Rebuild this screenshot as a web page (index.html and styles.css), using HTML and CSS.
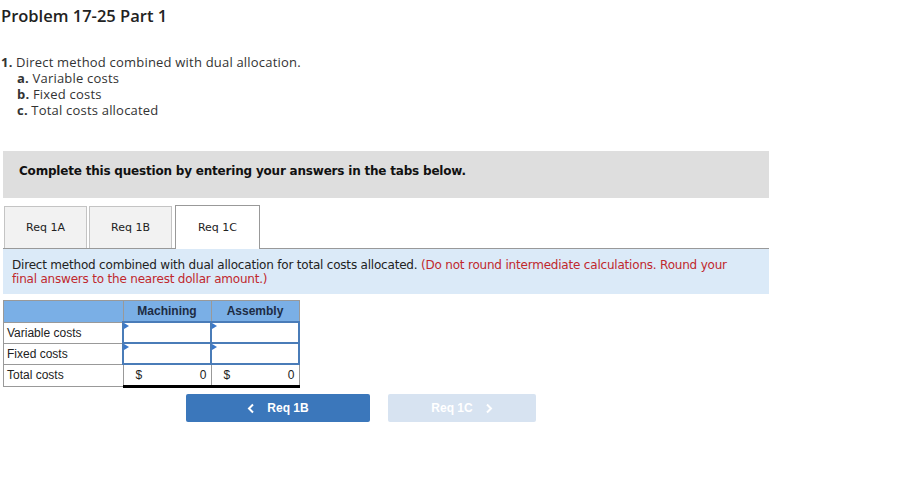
FILE: index.html
```html
<!DOCTYPE html>
<html>
<head>
<meta charset="utf-8">
<link rel="stylesheet" href="styles.css">
</head>
<body>
<h1 class="title">Problem 17-25 Part 1</h1>
<div class="parts">
  <div class="part"><b>1.</b> Direct method combined with dual allocation.</div>
  <div class="sub"><b>a.</b> Variable costs</div>
  <div class="sub"><b>b.</b> Fixed costs</div>
  <div class="sub"><b>c.</b> Total costs allocated</div>
</div>
<div class="wrap">
  <div class="banner">Complete this question by entering your answers in the tabs below.</div>
  <div class="tabs">
    <div class="tab">Req 1A</div>
    <div class="tab">Req 1B</div>
    <div class="tab active">Req 1C</div>
  </div>
  <div class="info">Direct method combined with dual allocation for total costs allocated. <span class="red">(Do not round intermediate calculations. Round your final answers to the nearest dollar amount.)</span></div>
  <table class="grid">
    <tr class="head"><th class="lbl"></th><th>Machining</th><th>Assembly</th></tr>
    <tr><td class="lbl">Variable costs</td><td class="inp"><span class="flag"></span></td><td class="inp"><span class="flag"></span></td></tr>
    <tr><td class="lbl">Fixed costs</td><td class="inp"><span class="flag"></span></td><td class="inp"><span class="flag"></span></td></tr>
    <tr class="total"><td class="lbl">Total costs</td><td class="val"><span>$</span><span>0</span></td><td class="val"><span>$</span><span>0</span></td></tr>
  </table>
  <div class="nav">
    <div class="btn prev"><svg class="chev left" width="8" height="11" viewBox="0 0 8 11"><path d="M6 1.5 L2 5.5 L6 9.5" fill="none" stroke="#fff" stroke-width="2"/></svg>Req 1B</div>
    <div class="btn next">Req 1C<svg class="chev right" width="8" height="11" viewBox="0 0 8 11"><path d="M2 1.5 L6 5.5 L2 9.5" fill="none" stroke="#fff" stroke-width="2"/></svg></div>
  </div>
</div>
</body>
</html>
```
FILE: styles.css
```css
html, body { margin: 0; padding: 0; background: #fff; }
body { font-family: "Open Sans", sans-serif; color: #222; }
.title { font-family: "Open Sans", sans-serif; font-weight: 600; font-size: 16.5px; line-height: 20px; margin: 6px 0 0 1px; color: #222; }
.parts { margin-top: 28px; font-family: "Open Sans", sans-serif; font-size: 13px; letter-spacing: 0.2px; line-height: 16px; color: #333; padding-left: 1px; }
.parts b { font-weight: 700; }
.sub { padding-left: 16px; }
.wrap { padding-left: 3px; width: 766px; }
.banner { margin-top: 33px; background: #dedede; height: 47px; box-sizing: border-box; padding-bottom: 7px; display: flex; align-items: center; padding-left: 16px; font-family: "DejaVu Sans", sans-serif; font-weight: bold; font-size: 12px; color: #111; letter-spacing: -0.2px; }
.tabs { margin-top: 7px; display: flex; gap: 2px; border-bottom: 1px solid #999; height: 43px; align-items: flex-end; }
.tab { width: 83px; height: 42px; box-sizing: border-box; background: #f2f2f2; border: 1px solid #c4c4c4; border-bottom: none; display: flex; align-items: center; justify-content: center; font-family: "DejaVu Sans", sans-serif; font-size: 11px; color: #222; }
.tab:first-child { margin-left: 1px; }
.tab.active { background: #fff; border: 1px solid #999; border-bottom: none; height: 44px; margin-bottom: -1px; margin-left: 1px; width: 85px; }
.info { background: #dbeaf8; height: 45px; box-sizing: border-box; padding: 9px 32px 0 9px; font-family: "DejaVu Sans", sans-serif; font-size: 12px; line-height: 14px; color: #222; letter-spacing: -0.2px; }
.red { color: #c0282d; }
.grid { margin-top: 6px; border-collapse: collapse; font-family: "Liberation Sans", Arial, sans-serif; font-size: 12px; color: #222; }
.grid td, .grid th { border: 1px solid #999; padding: 0; height: 20px; }
.grid th { background: #7aafe6; font-weight: bold; color: #1d2c44; text-align: center; width: 87px; }
.grid th.lbl { width: 118px; }
.grid td.lbl { padding-left: 3px; width: 115px; }
.grid td.inp { position: relative; border: 2px solid #4a7cb8; background: #fff; height: 17px; }
.flag { position: absolute; left: 0; top: 0; width: 0; height: 0; border-top: 3px solid transparent; border-bottom: 3px solid transparent; border-left: 5px solid #3a78c9; }
.grid tr.total td.val { border-bottom: 3px solid #000; padding: 0 4px 0 12px; }
.val span:first-child { float: left; }
.val span:last-child { float: right; }
.nav { display: flex; margin-top: 6px; margin-left: 183px; gap: 18px; }
.btn { height: 28px; border-radius: 2px; display: flex; align-items: center; justify-content: center; font-family: "Liberation Sans", Arial, sans-serif; font-weight: bold; font-size: 12px; color: #fff; }
.prev { width: 184px; background: #3b77bb; }
.next { width: 148px; background: #d7e3f1; }
.chev.left { margin-right: 12px; }
.chev.right { margin-left: 12px; }
```
